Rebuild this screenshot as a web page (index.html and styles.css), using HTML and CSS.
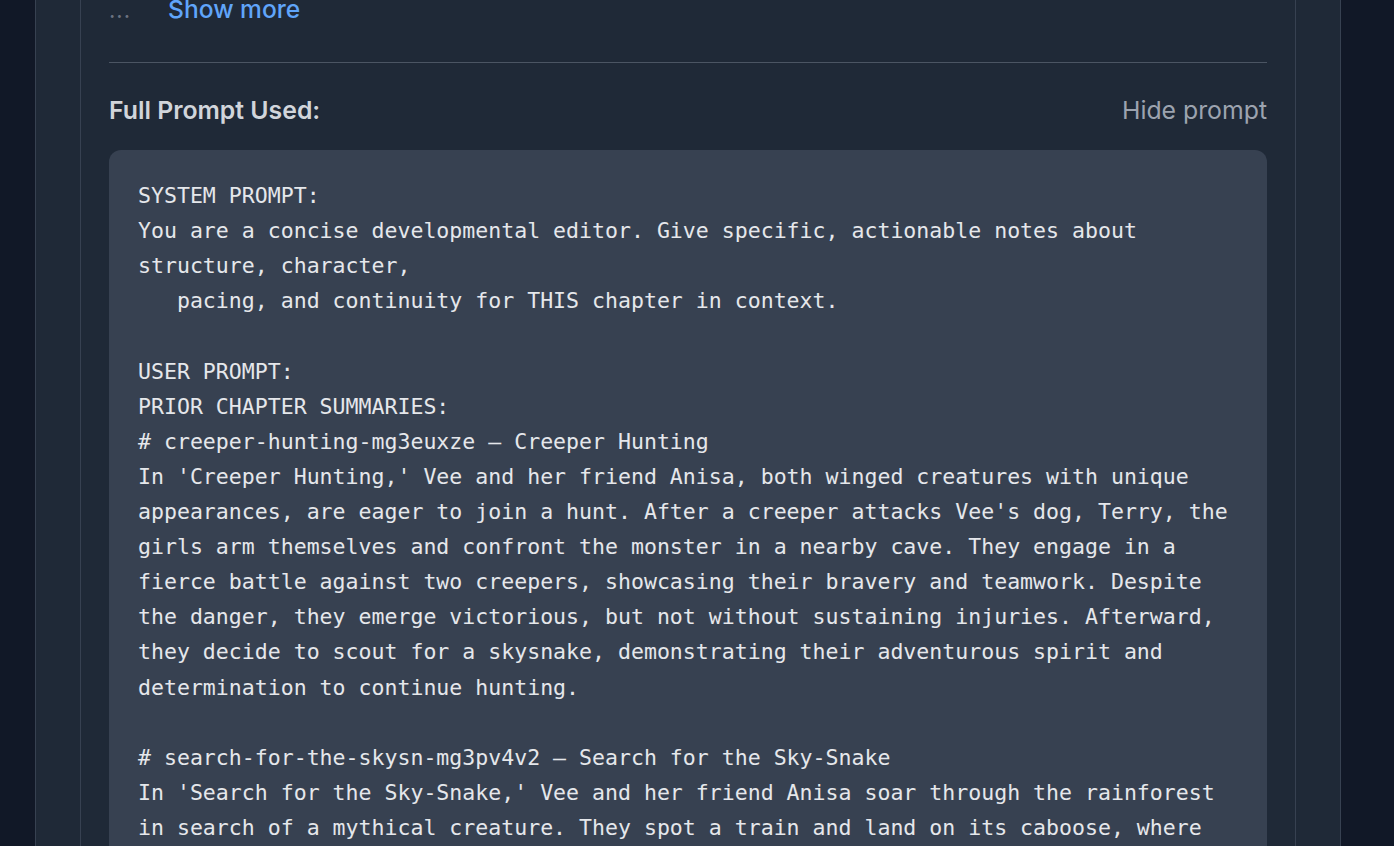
FILE: index.html
```html
<!DOCTYPE html>
<html lang="en">
<head>
<meta charset="utf-8">
<title>Chapter feedback</title>
<link rel="stylesheet" href="styles.css">
</head>
<body>
<div class="page">
  <div class="outer">
    <div class="inner">
      <div class="more-row">
        <span class="ellipsis">...</span>
        <button class="show-more">Show more</button>
      </div>
      <hr class="divider">
      <div class="prompt-head">
        <h3 class="prompt-title">Full Prompt Used:</h3>
        <button class="hide-prompt">Hide prompt</button>
      </div>
      <pre class="prompt-box">SYSTEM PROMPT:
You are a concise developmental editor. Give specific, actionable notes about structure, character,
   pacing, and continuity for THIS chapter in context.

USER PROMPT:
PRIOR CHAPTER SUMMARIES:
# creeper-hunting-mg3euxze — Creeper Hunting
In 'Creeper Hunting,' Vee and her friend Anisa, both winged creatures with unique appearances, are eager to join a hunt. After a creeper attacks Vee's dog, Terry, the girls arm themselves and confront the monster in a nearby cave. They engage in a fierce battle against two creepers, showcasing their bravery and teamwork. Despite the danger, they emerge victorious, but not without sustaining injuries. Afterward, they decide to scout for a skysnake, demonstrating their adventurous spirit and determination to continue hunting.

# search-for-the-skysn-mg3pv4v2 — Search for the Sky-Snake
In 'Search for the Sky-Snake,' Vee and her friend Anisa soar through the rainforest in search of a mythical creature. They spot a train and land on its caboose, where they meet the conductor and learn about the legend of the sky-snake.</pre>
    </div>
  </div>
</div>
</body>
</html>
```

FILE: styles.css
```css
html, body {
  margin: 0;
  padding: 0;
}
body {
  background: #111827;
  height: 846px;
  overflow: hidden;
  font-family: Inter, "Noto Sans", "Liberation Sans", sans-serif;
}
.page {
  padding: 0 53px 0 35px;
  height: 846px;
}
.outer {
  height: 900px;
  background: #1f2937;
  border-left: 1px solid #374151;
  border-right: 1px solid #374151;
  padding: 0 44px 0 44px;
}
.inner {
  height: 100%;
  border-left: 1px solid #374151;
  border-right: 1px solid #374151;
  padding: 0 28px;
}
.more-row {
  display: flex;
  align-items: baseline;
  gap: 37px;
  margin-top: -7px;
  height: 32px;
  line-height: 32px;
}
.ellipsis {
  color: #6b7280;
  font-size: 22px;
  letter-spacing: 1px;
}
.show-more {
  background: none;
  border: 0;
  padding: 0;
  font-family: inherit;
  font-size: 24.6px;
  font-weight: 500;
  color: #60a5fa;
  line-height: 32px;
}
.divider {
  border: 0;
  border-top: 1px solid #4b5563;
  margin: 37px 0 0;
  height: 0;
}
.prompt-head {
  display: flex;
  justify-content: space-between;
  align-items: center;
  margin-top: 31px;
  height: 32px;
}
.prompt-title {
  margin: 0;
  font-size: 24.8px;
  font-weight: 600;
  color: #d1d5db;
  line-height: 32px;
}
.hide-prompt {
  background: none;
  border: 0;
  padding: 0;
  font-family: inherit;
  font-size: 24.8px;
  font-weight: 400;
  color: #9ca3af;
  line-height: 32px;
}
.prompt-box {
  margin: 24px 0 0;
  background: #374151;
  border-radius: 12px;
  padding: 28px 29px;
  font-family: "DejaVu Sans Mono", "Liberation Mono", monospace;
  font-size: 21.55px;
  line-height: 35.11px;
  color: #e5e7eb;
  white-space: pre-wrap;
  word-break: normal;
}
```
